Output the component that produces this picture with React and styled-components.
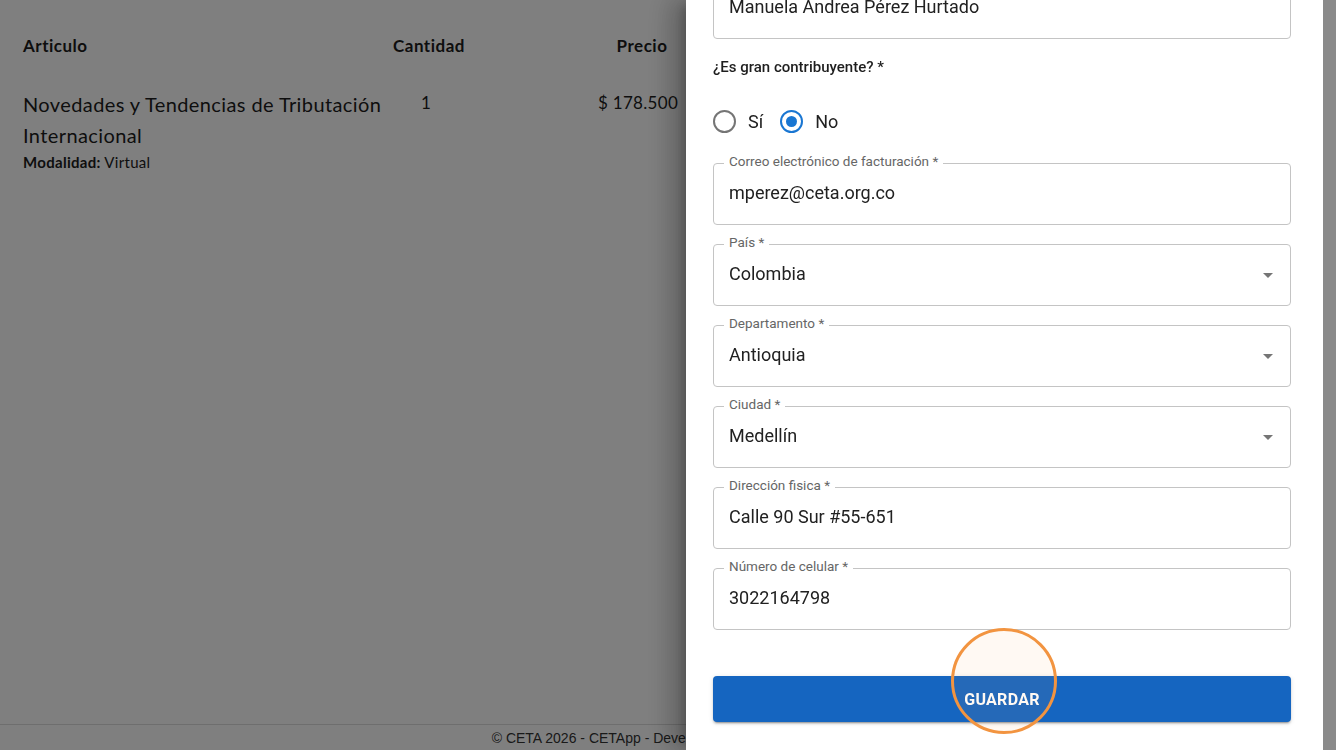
import React from "react";
import styled, { createGlobalStyle } from "styled-components";

const GlobalStyle = createGlobalStyle`
  html, body {
    margin: 0;
    padding: 0;
    height: 100%;
    overflow: hidden;
    background: #fff;
  }
  #root {
    height: 100%;
  }
  * {
    box-sizing: border-box;
  }
`;

const fields = [
  { label: "Correo electrónico de facturación *", value: "mperez@ceta.org.co" },
  { label: "País *", value: "Colombia", select: true },
  { label: "Departamento *", value: "Antioquia", select: true },
  { label: "Ciudad *", value: "Medellín", select: true },
  { label: "Dirección fisica *", value: "Calle 90 Sur #55-651" },
  { label: "Número de celular *", value: "3022164798" },
];

const App = () => {
  return (
    <>
      <GlobalStyle />
      <Page>
        <Main>
          <TableHead>
            <HeadCell>Articulo</HeadCell>
            <HeadCell center>Cantidad</HeadCell>
            <HeadCell center>Precio</HeadCell>
          </TableHead>
          <TableRow>
            <ItemCell>
              <ItemTitle>Novedades y Tendencias de Tributación Internacional</ItemTitle>
              <ItemMeta>
                <b>Modalidad:</b> Virtual
              </ItemMeta>
            </ItemCell>
            <ValueCell>1</ValueCell>
            <ValueCell shift>$ 178.500</ValueCell>
          </TableRow>
        </Main>
        <Footer>© CETA 2026 - CETApp - Developed by CETA Tech Team</Footer>
      </Page>

      <Backdrop />

      <Drawer>
        <DrawerBody>
          <Field first>
            <FieldValue>Manuela Andrea Pérez Hurtado</FieldValue>
          </Field>

          <Question>¿Es gran contribuyente? *</Question>
          <RadioRow>
            <RadioOption>
              <RadioCircle />
              <span>Sí</span>
            </RadioOption>
            <RadioOption>
              <RadioCircle checked />
              <span>No</span>
            </RadioOption>
          </RadioRow>

          <FieldList>
            {fields.map((f) => (
              <Field key={f.label}>
                <FieldLabel>{f.label}</FieldLabel>
                <FieldValue>{f.value}</FieldValue>
                {f.select && <Caret />}
              </Field>
            ))}
          </FieldList>

          <ButtonWrap>
            <SaveButton>GUARDAR</SaveButton>
            <Highlight />
          </ButtonWrap>
        </DrawerBody>
        <ScrollRail>
          <ScrollThumb />
        </ScrollRail>
      </Drawer>
    </>
  );
};

const Page = styled.div`
  height: 100%;
  display: flex;
  flex-direction: column;
  font-family: Lato, "Open Sans", sans-serif;
  color: #1c1c1c;
`;

const Main = styled.main`
  flex: 1;
  padding: 33px 0 0 23px;
`;

const TableHead = styled.div`
  display: grid;
  grid-template-columns: 360px 92px 334px;
  align-items: center;
  height: 24px;
`;

const HeadCell = styled.div`
  font-size: 17px;
  font-weight: 700;
  letter-spacing: 0.5px;
  text-align: ${(p) => (p.center ? "center" : "left")};
`;

const TableRow = styled.div`
  display: grid;
  grid-template-columns: 360px 92px 334px;
  margin-top: 32px;
`;

const ItemCell = styled.div`
  display: flex;
  flex-direction: column;
`;

const ItemTitle = styled.div`
  font-size: 20px;
  letter-spacing: 0.4px;
  line-height: 31px;
`;

const ItemMeta = styled.div`
  font-size: 15px;
  letter-spacing: 0.3px;
  line-height: 20px;
  margin-top: 1px;

  b {
    font-weight: 700;
  }
`;

const ValueCell = styled.div`
  font-size: 17px;
  letter-spacing: 0.3px;
  line-height: 27px;
  text-align: center;
  padding-right: ${(p) => (p.shift ? "8px" : "6px")};
`;

const Footer = styled.footer`
  height: 26px;
  border-top: 1px solid #dcdcdc;
  display: flex;
  justify-content: center;
  align-items: center;
  font-family: "Liberation Sans", Arial, sans-serif;
  font-size: 14px;
  color: #333;
`;

const Backdrop = styled.div`
  position: fixed;
  inset: 0;
  background: rgba(0, 0, 0, 0.5);
`;

const Drawer = styled.aside`
  position: fixed;
  top: 0;
  right: 0;
  bottom: 0;
  width: 655px;
  background: #fff;
  display: flex;
  box-shadow: -8px 0 10px -5px rgba(0, 0, 0, 0.2),
    -16px 0 24px 2px rgba(0, 0, 0, 0.14), -6px 0 30px 5px rgba(0, 0, 0, 0.12);
  font-family: Roboto, "Liberation Sans", sans-serif;
  color: #212121;
`;

const DrawerBody = styled.div`
  flex: 1;
  padding: 0 32px 0 27px;
  display: flex;
  flex-direction: column;
  overflow: hidden;
`;

const FieldList = styled.div`
  display: flex;
  flex-direction: column;
  gap: 19px;
`;

const Field = styled.div`
  position: relative;
  height: 62px;
  flex: none;
  border: 1px solid #c4c4c4;
  border-radius: 4px;
  display: flex;
  align-items: center;
  padding: 0 15px 3px;
  margin-top: ${(p) => (p.first ? "-23px" : "0")};
`;

const FieldLabel = styled.span`
  position: absolute;
  top: -12px;
  left: 10px;
  padding: 0 5px;
  background: #fff;
  font-size: 13.5px;
  line-height: 18px;
  color: #666;
`;

const FieldValue = styled.span`
  font-size: 18px;
  color: #212121;
`;

const Caret = styled.span`
  position: absolute;
  right: 17px;
  top: 50%;
  margin-top: -2px;
  width: 0;
  height: 0;
  border-left: 5px solid transparent;
  border-right: 5px solid transparent;
  border-top: 5px solid #757575;
`;

const Question = styled.div`
  margin-top: 17px;
  font-size: 15px;
  font-weight: 500;
  line-height: 22px;
  color: #1e1e1e;
`;

const RadioRow = styled.div`
  display: flex;
  align-items: center;
  gap: 17px;
  height: 24px;
  margin: 31px 0 30px;
`;

const RadioOption = styled.label`
  display: flex;
  align-items: center;
  gap: 12px;
  font-size: 18px;
  color: #212121;
`;

const RadioCircle = styled.span`
  width: 23px;
  height: 23px;
  border-radius: 50%;
  border: 2px solid ${(p) => (p.checked ? "#1976d2" : "#757575")};
  display: flex;
  align-items: center;
  justify-content: center;

  &::after {
    content: "";
    width: 11px;
    height: 11px;
    border-radius: 50%;
    background: ${(p) => (p.checked ? "#1976d2" : "transparent")};
  }
`;

const ButtonWrap = styled.div`
  position: relative;
  margin-top: 46px;
`;

const SaveButton = styled.button`
  width: 100%;
  height: 46px;
  border: none;
  border-radius: 4px;
  background: #1565c0;
  color: #fff;
  font-family: Roboto, "Liberation Sans", sans-serif;
  font-size: 16px;
  font-weight: 700;
  letter-spacing: 0.3px;
  box-shadow: 0 3px 1px -2px rgba(0, 0, 0, 0.2), 0 2px 2px 0 rgba(0, 0, 0, 0.14),
    0 1px 5px 0 rgba(0, 0, 0, 0.12);
`;

const Highlight = styled.span`
  position: absolute;
  left: 50%;
  top: 5px;
  width: 106px;
  height: 106px;
  margin: -53px 0 0 -51px;
  border-radius: 50%;
  border: 3px solid #f29440;
  background: rgba(255, 170, 90, 0.07);
  pointer-events: none;
`;

const ScrollRail = styled.div`
  width: 18px;
  padding-right: 5px;
  display: flex;
`;

const ScrollThumb = styled.div`
  flex: 1;
  background: #8a8a8a;
`;

export default App;
